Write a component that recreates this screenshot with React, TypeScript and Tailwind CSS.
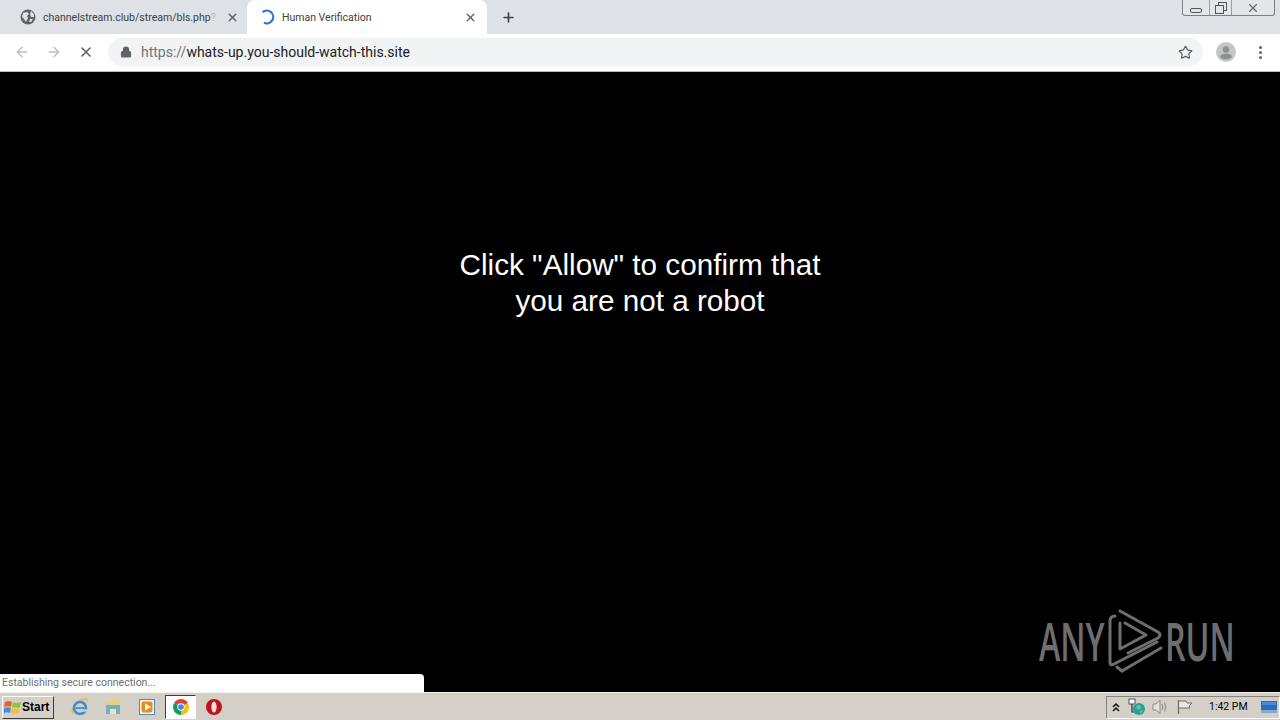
import React from 'react';
import { ArrowLeft, ArrowRight, Lock, Plus, Star, X } from 'lucide-react';

const GlobeIcon = () => (
  <svg width="16" height="16" viewBox="0 0 16 16" className="shrink-0">
    <circle cx="8" cy="8" r="7.5" fill="#5f6368" />
    <path d="M3 4 L7 3 L9 5 L7 7 L8 9 L6 13 L4 10 L2 8 Z M11 2 L14 5 L14 8 L11 8 L10 5 Z M10 10 L13 10 L11 13 L9 13 Z" fill="#dee1e6" />
  </svg>
);

const SpinnerIcon = () => (
  <svg width="16" height="16" viewBox="0 0 16 16" className="shrink-0">
    <path d="M3.5 3.2 A6.4 6.4 0 1 1 5 13.7" fill="none" stroke="#2f76cf" strokeWidth="2.2" />
  </svg>
);

const AvatarIcon = () => (
  <svg width="20" height="20" viewBox="0 0 20 20">
    <circle cx="10" cy="10" r="10" fill="#c4c6c9" />
    <circle cx="10" cy="7.5" r="3.2" fill="#8e9194" />
    <ellipse cx="10" cy="14.5" rx="6" ry="3" fill="#8e9194" />
  </svg>
);

const WinLogo = () => (
  <svg width="18" height="17" viewBox="0 0 18 17" className="shrink-0">
    <path d="M1 3 Q4 1 8 3 L7 8 Q4 6.5 0 8 Z" fill="#e8632a" />
    <path d="M9 3 Q12 5 17 3 L16 8 Q12 9.5 8 8 Z" fill="#8cc43c" />
    <path d="M0 9 Q4 7.5 7 9 L6 14 Q3 12.5 0 14 Z" fill="#3f8fe0" />
    <path d="M8 9 Q12 11 16 9 L15 14 Q11 15.5 7 14 Z" fill="#f4c22b" />
  </svg>
);

const IeIcon = () => (
  <svg width="18" height="18" viewBox="0 0 18 18">
    <path d="M2 16 Q0 13 3 8 Q7 2 14 1 Q17 1 16 4" fill="none" stroke="#e8b93a" strokeWidth="1.3" />
    <circle cx="9" cy="10" r="6" fill="none" stroke="#3b8fd6" strokeWidth="2.6" />
    <rect x="5" y="9.2" width="8.5" height="1.8" fill="#3b8fd6" />
    <rect x="11" y="11.4" width="5" height="2.2" fill="#d4d0c8" />
  </svg>
);

const FolderIcon = () => (
  <svg width="16" height="16" viewBox="0 0 16 16">
    <path d="M1 3 H6 L7 1 H14 V14 H1 Z" fill="#e9cf7d" />
    <path d="M1 6 H15 V15 H11 V10 H5 V15 H1 Z" fill="#6fb0cf" />
    <path d="M5 10 H11 V15 H5 Z" fill="#f0e3b0" />
  </svg>
);

const PlayerIcon = () => (
  <svg width="16" height="16" viewBox="0 0 16 16">
    <rect x="0.5" y="0.5" width="15" height="15" fill="#f2f2f2" stroke="#4a8cc4" />
    <rect x="2.5" y="2.5" width="11" height="11" rx="2" fill="#ee8a1c" />
    <path d="M6 4.5 L12 8 L6 11.5 Z" fill="#fff" />
  </svg>
);

const ChromeIcon = () => (
  <svg width="16" height="16" viewBox="0 0 16 16">
    <path d="M8 8 L1.1 4 A8 8 0 0 1 14.9 4 Z" fill="#db4437" />
    <path d="M8 8 L14.9 4 A8 8 0 0 1 8 16 Z" fill="#f4c20d" />
    <path d="M8 8 L8 16 A8 8 0 0 1 1.1 4 Z" fill="#0f9d58" />
    <circle cx="8" cy="8" r="3.7" fill="#fff" />
    <circle cx="8" cy="8" r="2.8" fill="#4285f4" />
  </svg>
);

const OperaIcon = () => (
  <svg width="16" height="16" viewBox="0 0 16 16">
    <circle cx="8" cy="8" r="8" fill="#c4111b" />
    <ellipse cx="8" cy="8" rx="2.6" ry="5.6" fill="#f6e4e0" />
  </svg>
);

const ChevronsIcon = () => (
  <svg width="8" height="9" viewBox="0 0 8 9" fill="none" stroke="#111" strokeWidth="1.5">
    <path d="M1 4 L4 1 L7 4" />
    <path d="M1 8 L4 5 L7 8" />
  </svg>
);

const NetworkIcon = () => (
  <svg width="18" height="18" viewBox="0 0 18 18">
    <rect x="1" y="1" width="6" height="5" fill="#f4f4f4" stroke="#333" strokeWidth="0.8" />
    <path d="M4 6 V14 H8" fill="none" stroke="#333" strokeWidth="1.2" />
    <circle cx="11" cy="11" r="6" fill="#2f9c9c" />
    <path d="M8 8 L12 7 L13 10 L10 12 Z M12 13 L15 12 L13 16 Z" fill="#63cf8a" />
  </svg>
);

const SpeakerIcon = () => (
  <svg width="18" height="16" viewBox="0 0 18 16">
    <path d="M2 5 H5 L9 1.5 V14.5 L5 11 H2 Z" fill="#e4e2dc" stroke="#85837d" strokeWidth="0.9" />
    <path d="M11 5 Q12.5 8 11 11 M13.5 3.5 Q16 8 13.5 12.5" fill="none" stroke="#8b8983" strokeWidth="1" />
  </svg>
);

const FlagIcon = () => (
  <svg width="16" height="16" viewBox="0 0 16 16">
    <path d="M1.5 1 V15" stroke="#66645f" strokeWidth="1.2" />
    <path d="M2 2 H9 L10 4 H15 L12 7 L13 9 H2" fill="#e8e6e0" stroke="#66645f" strokeWidth="0.9" />
  </svg>
);

const DesktopIcon = () => (
  <svg width="16" height="12" viewBox="0 0 16 12">
    <rect width="16" height="12" fill="#2b6cc0" />
    <rect y="9" width="16" height="3" fill="#8aa8c8" />
    <rect x="1" y="1" width="14" height="3" fill="#4c8ad8" />
  </svg>
);

const RunLogo = () => (
  <svg width="56" height="64" viewBox="0 0 56 64" fill="none" stroke="#6e6e6e" strokeWidth="3" strokeLinejoin="round" strokeLinecap="round">
    <path d="M7 7 Q2 7 2 12 L2 54 Q2 57 6 55 L49 33" />
    <path d="M12 2 L50 23 Q54 26 50 29 L20 44" />
    <path d="M12 14 L12 40 L38 26 L17 14" />
    <path d="M14 62 L53 39" />
    <path d="M14 62 L9 58" />
  </svg>
);

const App: React.FC = () => {
  return (
    <div className="relative flex h-[720px] w-[1280px] flex-col overflow-hidden bg-black font-['Liberation_Sans',Arial,sans-serif]">
      {/* Tab strip */}
      <div className="relative flex h-[34px] shrink-0 items-stretch bg-[#dee1e6] pl-[20px]">
        <div className="flex w-[227px] items-center">
          <GlobeIcon />
          <span className="ml-[7px] w-[176px] whitespace-nowrap pt-[1px] font-['Roboto',sans-serif] text-[10.5px] text-[#3c4043]">
            channelstream.club/stream/bls.php<span className="text-[#b4b7bb]">?</span>
          </span>
          <X className="ml-[7px] shrink-0 text-[#5f6368]" size={13} strokeWidth={2.5} />
        </div>
        <div className="flex w-[240px] items-center rounded-t-[8px] bg-white pl-[12px]">
          <SpinnerIcon />
          <span className="ml-[7px] w-[182px] whitespace-nowrap pt-[1px] font-['Roboto',sans-serif] text-[10.5px] text-[#3c4043]">Human Verification</span>
          <X className="shrink-0 text-[#5f6368]" size={13} strokeWidth={2.5} />
        </div>
        <div className="ml-[14px] flex items-center">
          <Plus className="text-[#3c4043]" size={15} strokeWidth={2.6} />
        </div>
        {/* Window buttons */}
        <div className="absolute right-[5px] top-0 flex h-[16px] w-[93px] rounded-b-[3px] border border-t-0 border-[#7b7f86] bg-[#e4e6ea]">
          <div className="flex w-[27px] items-end justify-center border-r border-[#9a9da3] pb-[2px]">
            <div className="h-[5px] w-[12px] rounded-[2px] border border-[#555]" />
          </div>
          <div className="flex w-[22px] items-center justify-center border-r border-[#9a9da3]">
            <svg width="12" height="12" viewBox="0 0 12 12" fill="none" stroke="#555">
              <rect x="3.5" y="0.5" width="8" height="8" fill="#e4e6ea" />
              <rect x="0.5" y="3.5" width="8" height="8" fill="#e4e6ea" />
            </svg>
          </div>
          <div className="flex flex-1 items-center justify-center">
            <X className="text-[#666]" size={14} strokeWidth={2} />
          </div>
        </div>
      </div>

      {/* Toolbar */}
      <div className="flex h-[38px] shrink-0 items-center border-b border-[#b8babd] bg-white pb-[1px]">
        <div className="ml-[14px] flex w-[32px] shrink-0">
          <ArrowLeft className="text-[#bcbfc3]" size={16} strokeWidth={2.2} />
        </div>
        <div className="flex w-[32px] shrink-0">
          <ArrowRight className="text-[#bcbfc3]" size={16} strokeWidth={2.2} />
        </div>
        <div className="flex w-[30px] shrink-0">
          <X className="text-[#5f6368]" size={16} strokeWidth={2.4} />
        </div>
        <div className="flex h-[28px] w-[1095px] shrink-0 items-center rounded-full bg-[#f1f3f4] pl-[12px] pr-[10px]">
          <Lock className="shrink-0 text-[#5f6368]" size={12} fill="#5f6368" strokeWidth={2.4} />
          <span className="ml-[9px] font-['Roboto',sans-serif] text-[14px] text-[#70757a]">
            https://<span className="text-[#202124]">whats-up.you-should-watch-this.site</span>
          </span>
          <Star className="ml-auto text-[#5f6368]" size={15} strokeWidth={2} />
        </div>
        <div className="ml-[13px] shrink-0">
          <AvatarIcon />
        </div>
        <div className="ml-[23px] flex shrink-0 flex-col gap-[2px]">
          <span className="h-[3px] w-[3px] rounded-full bg-[#5f6368]" />
          <span className="h-[3px] w-[3px] rounded-full bg-[#5f6368]" />
          <span className="h-[3px] w-[3px] rounded-full bg-[#5f6368]" />
        </div>
      </div>

      {/* Page */}
      <div className="relative flex-1 bg-black pt-[175px] text-center text-[29.7px] leading-[36px] text-white">
        <p>Click "Allow" to confirm that</p>
        <p>you are not a robot</p>

        <div className="absolute bottom-0 left-0 flex h-[18px] w-[424px] items-center rounded-tr-[4px] bg-white pl-[2px] font-['Roboto',sans-serif] text-[10.5px] text-[#6b6f73]">
          Establishing secure connection...
        </div>

        {/* Watermark */}
        <div className="absolute left-[1039px] top-[537px] flex h-[64px] w-[192px] items-center text-[#6e6e6e]">
          <span className="w-[62px] origin-left scale-x-[0.62] whitespace-nowrap font-['Open_Sans',sans-serif] text-[52px] font-semibold leading-none">ANY</span>
          <div className="ml-[7px] shrink-0"><RunLogo /></div>
          <span className="ml-[1px] w-[62px] origin-left scale-x-[0.62] whitespace-nowrap font-['Open_Sans',sans-serif] text-[52px] font-semibold leading-none">RUN</span>
        </div>
      </div>

      {/* Taskbar */}
      <div className="flex h-[28px] shrink-0 items-center border-t border-[#f4f2ec] bg-[#d4d0c8] pt-[1px]">
        <div className="ml-[2px] flex h-[23px] w-[52px] shrink-0 items-center border border-b-[#3f3e3a] border-l-white border-r-[#3f3e3a] border-t-white pl-[1px] text-[12px] font-bold text-black">
          <WinLogo />
          <span>Start</span>
        </div>
        <div className="ml-[17px] flex w-[18px] shrink-0 justify-center"><IeIcon /></div>
        <div className="ml-[16px] flex w-[16px] shrink-0 justify-center"><FolderIcon /></div>
        <div className="ml-[18px] flex w-[16px] shrink-0 justify-center"><PlayerIcon /></div>
        <div className="ml-[10px] flex h-[24px] w-[31px] shrink-0 items-center justify-center border border-b-white border-l-[#3f3e3a] border-r-white border-t-[#3f3e3a] bg-white">
          <ChromeIcon />
        </div>
        <div className="ml-[10px] flex w-[16px] shrink-0 justify-center"><OperaIcon /></div>

        <div className="ml-auto flex h-[23px] w-[174px] shrink-0 items-center border border-b-white border-l-[#85837d] border-r-white border-t-[#85837d]">
          <span className="ml-[4px] flex w-[10px] shrink-0 justify-center"><ChevronsIcon /></span>
          <div className="ml-[7px] shrink-0"><NetworkIcon /></div>
          <div className="ml-[5px] shrink-0"><SpeakerIcon /></div>
          <div className="ml-[8px] shrink-0"><FlagIcon /></div>
          <span className="ml-[16px] w-[42px] whitespace-nowrap font-['Roboto',sans-serif] text-[10.5px] text-black">1:42 PM</span>
          <div className="ml-[10px] shrink-0"><DesktopIcon /></div>
        </div>
      </div>
    </div>
  );
};

export default App;
